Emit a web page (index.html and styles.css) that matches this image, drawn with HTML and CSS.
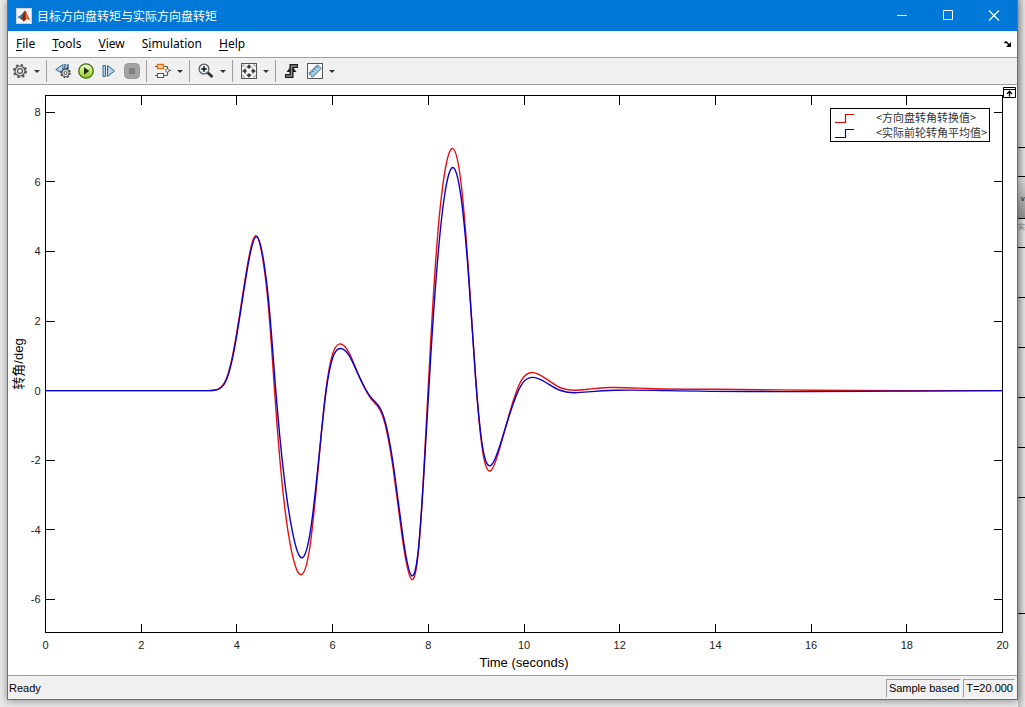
FILE: index.html
```html
<!DOCTYPE html>
<html lang="zh-CN">
<head>
    <meta charset="UTF-8">
    <meta name="viewport" content="width=device-width, initial-scale=1.0">
    <title>目标方向盘转矩与实际方向盘转矩</title>
    <link rel="stylesheet" href="styles.css">
</head>
<body>

    <main class="window">
        <header class="titlebar">
            <svg class="logo" width="16" height="16" viewBox="0 0 16 16">
                <rect x="0.5" y="0.5" width="15" height="15" fill="#f2f5f7" stroke="#c9d3da"/>
                <path d="M1.5 9 L5 7 L7 9 L4.5 11 Z" fill="#2d7fae"/>
                <path d="M5 7 C7 6 7.5 3.5 9 2.5 L7 9 Z" fill="#1d4a68"/>
                <path d="M9 2.5 C10.5 3 12 9 14.5 12.5 C12.5 11.5 11.5 10.5 10.5 11 C9.5 11.5 8.5 13.5 7.5 13.5 C7 12 6 11 4.5 11 C7 9.5 8 6 9 2.5 Z" fill="#c8401c"/>
                <path d="M9 2.5 C9.8 5 10 8 9.3 12 L7.5 13.5 C7 12 6 11 4.5 11 C7 9.5 8 6 9 2.5 Z" fill="#8c2313"/>
                <path d="M9.3 4 C10.5 6 11 8.5 12 10.3 L10 10.5 Z" fill="#f08a2c"/>
            </svg>
            <h1>目标方向盘转矩与实际方向盘转矩</h1>
            <button type="button" class="caption" aria-label="Minimize">
                <svg width="12" height="12" viewBox="0 0 12 12"><path d="M1 5.5 H11" stroke="#fff"/></svg>
            </button>
            <button type="button" class="caption" aria-label="Maximize">
                <svg width="12" height="12" viewBox="0 0 12 12"><path d="M1.5 0.5 H10.5 V9.5 H1.5 Z" stroke="#fff" fill="none"/></svg>
            </button>
            <button type="button" class="caption" aria-label="Close">
                <svg width="12" height="12" viewBox="0 0 12 12"><path d="M1 0.5 L11 10.5 M11 0.5 L1 10.5" stroke="#fff" stroke-width="1.2"/></svg>
            </button>
        </header>

        <nav class="menubar">
            <button type="button"><u>F</u>ile</button>
            <button type="button"><u>T</u>ools</button>
            <button type="button"><u>V</u>iew</button>
            <button type="button">S<u>i</u>mulation</button>
            <button type="button"><u>H</u>elp</button>
            <button type="button" class="dock" aria-label="Dock">
                <svg width="8" height="7" viewBox="0 0 8 7"><path d="M0.5 2 L2 0.8 L5.5 4.3" stroke="#000" stroke-width="1.5" fill="none"/><path d="M7 1 V6 H2 Z" fill="#000"/></svg>
            </button>
        </nav>

        <div class="toolbar">
            <button type="button" class="tool" aria-label="Configuration">
                <svg width="16" height="16" viewBox="0 0 16 16">
                    <circle cx="8" cy="8" r="6.2" fill="none" stroke="#555" stroke-width="1.8" stroke-dasharray="2.4 2.47"/>
                    <circle cx="8" cy="8" r="5" fill="#ddd" stroke="#555" stroke-width="1.2"/>
                    <circle cx="8" cy="8" r="2.4" fill="#f5f5f5" stroke="#555" stroke-width="1.2"/>
                </svg>
            </button>
            <button type="button" class="caret" aria-label="Configuration options"></button>
            <span class="sep"></span>
            <button type="button" class="tool" aria-label="Stepping options">
                <svg width="16" height="16" viewBox="0 0 16 16">
                    <path d="M8 1.5 V11 L0.8 6.5 Z" fill="#b9d3e8" stroke="#33658f"/>
                    <path d="M9.5 1.5 H11 V6 H9.5 Z M12.5 1.5 H13.5 V6 H12.5 Z" fill="#b9d3e8" stroke="#33658f" stroke-width="0.8"/>
                    <circle cx="10.5" cy="10" r="4.5" fill="none" stroke="#444" stroke-width="1.6" stroke-dasharray="1.8 1.73"/>
                    <circle cx="10.5" cy="10" r="3.7" fill="#eee" stroke="#444"/>
                    <circle cx="10.5" cy="10" r="1.5" fill="#fff" stroke="#444"/>
                </svg>
            </button>
            <button type="button" class="tool" aria-label="Run">
                <svg width="16" height="16" viewBox="0 0 16 16">
                    <defs>
                        <linearGradient id="run" x1="0" y1="0" x2="0" y2="1">
                            <stop offset="0" stop-color="#f4fbe2"/>
                            <stop offset="0.6" stop-color="#b9e45c"/>
                            <stop offset="1" stop-color="#7fc41c"/>
                        </linearGradient>
                    </defs>
                    <circle cx="8" cy="8" r="7.2" fill="url(#run)" stroke="#3f6b12" stroke-width="1.3"/>
                    <path d="M6 4.2 L11.3 8 L6 11.8 Z" fill="#1d2b10"/>
                </svg>
            </button>
            <button type="button" class="tool" aria-label="Step forward">
                <svg width="16" height="16" viewBox="0 0 16 16">
                    <path d="M2 2.5 H4.5 V13.5 H2 Z M6.5 2.5 L13.5 8 L6.5 13.5 Z" fill="#b5d3ec" stroke="#33658f"/>
                </svg>
            </button>
            <button type="button" class="tool" aria-label="Stop" disabled>
                <svg width="16" height="16" viewBox="0 0 16 16">
                    <rect x="0.5" y="0.5" width="15" height="15" rx="4" fill="#a3a3a3" stroke="#979797"/>
                    <rect x="5" y="5" width="6" height="6" fill="#808080"/>
                </svg>
            </button>
            <span class="sep"></span>
            <button type="button" class="tool" aria-label="Highlight block">
                <svg width="16" height="16" viewBox="0 0 16 16">
                    <path d="M0 3.5 H12.5 V6 M12.5 9 V12.5 H0 M14 7.5 H16" fill="none" stroke="#555"/>
                    <rect x="2.5" y="1.5" width="6" height="4" fill="#ffd9b0" stroke="#e0700f" stroke-width="1.4"/>
                    <rect x="2.5" y="10.5" width="6" height="4" fill="#fff" stroke="#555"/>
                    <circle cx="12.5" cy="7.5" r="1.7" fill="#fff" stroke="#555"/>
                </svg>
            </button>
            <button type="button" class="caret" aria-label="Highlight options"></button>
            <span class="sep"></span>
            <button type="button" class="tool" aria-label="Zoom">
                <svg width="16" height="16" viewBox="0 0 16 16">
                    <path d="M9.5 9.5 L14.5 14" stroke="#333" stroke-width="3"/>
                    <circle cx="6" cy="6" r="4.9" fill="#e3f0f7" stroke="#555" stroke-width="1.2"/>
                    <path d="M6 3.2 V8.8 M3.2 6 H8.8" stroke="#111" stroke-width="1.6"/>
                </svg>
            </button>
            <button type="button" class="caret" aria-label="Zoom options"></button>
            <span class="sep"></span>
            <button type="button" class="tool" aria-label="Scale axes">
                <svg width="16" height="16" viewBox="0 0 16 16">
                    <rect x="0.5" y="0.5" width="15" height="15" fill="#f6f6f6" stroke="#555"/>
                    <path d="M8 1.2 L11 4.6 H5 Z M8 14.8 L11 11.4 H5 Z M1.2 8 L4.6 5 V11 Z M14.8 8 L11.4 5 V11 Z" fill="#3c3c3c"/>
                    <path d="M8 4 V5.5 M8 10.5 V12 M4 8 H5.5 M10.5 8 H12" stroke="#3c3c3c" stroke-width="2"/>
                    <path d="M2 4 V2 H4 M12 2 H14 V4 M14 12 V14 H12 M4 14 H2 V12" fill="none" stroke="#999"/>
                </svg>
            </button>
            <button type="button" class="caret" aria-label="Scale options"></button>
            <span class="sep"></span>
            <button type="button" class="tool" aria-label="Triggers">
                <svg width="16" height="16" viewBox="0 0 16 16">
                    <path d="M1 13 H7.5 V3 H14" fill="none" stroke="#1c1c1c" stroke-width="4"/>
                    <path d="M7.5 2.5 L12.5 9 H2.5 Z" fill="#1c1c1c"/>
                    <path d="M2 13 H7.5 V3 H13" fill="none" stroke="#8c8c8c" stroke-width="1.4"/>
                </svg>
            </button>
            <button type="button" class="tool" aria-label="Measurements">
                <svg width="16" height="16" viewBox="0 0 16 16">
                    <rect x="0.5" y="0.5" width="15" height="15" fill="#fafafa" stroke="#555"/>
                    <path d="M10.5 1.8 L14.2 5.5 L5.5 14.2 L1.8 10.5 Z" fill="#a3cfe6" stroke="#3f7896"/>
                    <path d="M9 3.5 L10.5 5 M7 5.5 L8.5 7 M5 7.5 L6.5 9 M3.2 9.3 L4.5 10.6" stroke="#2a566e"/>
                </svg>
            </button>
            <button type="button" class="caret" aria-label="Measurement options"></button>
        </div>

        <section class="scope">
            <svg id="plot" class="plot" role="img" aria-label="转角/deg"></svg>
            <button type="button" class="expand" aria-label="Maximize axes">
                <svg width="13" height="11" viewBox="0 0 13 11"><path d="M0.5 0.5 H12.5 V10.5 H0.5 Z M0.5 2.5 H12.5" fill="#fff" stroke="#000"/><path d="M6.5 9.5 V5 M4 7 L6.5 4.3 L9 7" fill="none" stroke="#000" stroke-width="1.3"/></svg>
            </button>
            <ul class="legend">
                <li>
                    <svg width="19" height="10" viewBox="0 0 19 10"><path d="M0 9.5 H10.5 V1.5 H19" fill="none" stroke="#e00000" stroke-width="1.2"/></svg>
                    <span>&lt;方向盘转角转换值&gt;</span>
                </li>
                <li>
                    <svg width="19" height="10" viewBox="0 0 19 10"><path d="M0 9.5 H10.5 V1.5 H19" fill="none" stroke="#0000d0" stroke-width="1.2"/></svg>
                    <span>&lt;实际前轮转角平均值&gt;</span>
                </li>
            </ul>
        </section>

        <footer class="statusbar">
            <span class="ready">Ready</span>
            <span class="panel">Sample based</span>
            <span class="panel">T=20.000</span>
        </footer>
    </main>

    <!-- edge of the window behind -->
    <aside class="behind">
        <div class="first"></div>
        <div class="head"></div>
        <div class="tab">v</div>
        <div class="label">实</div>
        <div class="row"></div>
        <div class="row"></div>
        <div class="row"></div>
        <div class="row"></div>
        <div class="row"></div>
        <div class="tall"></div>
        <div class="last"></div>
    </aside>

    <script src="scope.js"></script>
</body>
</html>
```

FILE: styles.css
```css
* {
    box-sizing: border-box;
}

body {
    margin: 0;
    padding-left: 7px;
    height: 100vh;
    display: flex;
    overflow: hidden;
    background-color: #e9e9e9;
    font-family: "Liberation Sans", Arial, sans-serif;
    color: #000;
}

button {
    margin: 0;
    padding: 0;
    border: none;
    background: none;
    font: inherit;
    color: inherit;
}

svg {
    display: block;
    flex-shrink: 0;
}

.window {
    flex: 1;
    min-width: 0;
    margin-bottom: 7px;
    display: flex;
    flex-direction: column;
    position: relative;
    border: 1px solid #2b80b8;
    border-top-color: #0078d7;
    background-color: #fff;
    box-shadow: 0 1px 8px rgba(0, 0, 0, 0.4);
}

/* title bar */
.titlebar {
    height: 30px;
    display: flex;
    align-items: center;
    padding-left: 8px;
    background-color: #0078d7;
    color: #fff;
}

.titlebar h1 {
    flex: 1;
    margin: 0 0 0 5px;
    font: 12px/16px "Noto Sans CJK SC", sans-serif;
}

.caption {
    width: 46px;
    height: 30px;
    display: flex;
    justify-content: center;
    align-items: center;
}

/* menu */
.menubar {
    height: 26px;
    display: flex;
    align-items: center;
    gap: 17px;
    padding: 0 5px 0 8px;
    font: 12px/18px "Noto Sans", sans-serif;
}

.menubar u {
    text-underline-offset: 2px;
}

.dock {
    margin-left: auto;
}

/* toolbar */
.toolbar {
    height: 28px;
    display: flex;
    align-items: center;
    border-top: 1px solid #a0a0a0;
    border-bottom: 1px solid #a0a0a0;
    background-color: #f0f0f0;
}

.tool {
    width: 23px;
    height: 24px;
    display: flex;
    justify-content: center;
    align-items: center;
}

.caret {
    width: 12px;
    height: 24px;
    display: flex;
    justify-content: center;
    align-items: center;
}

.caret::before {
    content: "";
    border: 3px solid transparent;
    border-top-color: #333;
    border-bottom: none;
}

.sep {
    width: 1px;
    height: 22px;
    margin: 0 4px 0 3px;
    background-color: #a0a0a0;
}

/* plot */
.scope {
    flex: 1;
    min-height: 0;
    position: relative;
}

.plot {
    width: 100%;
    height: 100%;
    position: absolute;
}

.plot text {
    font-size: 11px;
    fill: #222;
}

.plot .title {
    font-family: "Liberation Sans", "Noto Sans CJK SC", sans-serif;
    font-size: 13px;
    fill: #000;
}

.plot .axis {
    fill: none;
    stroke: #000;
    shape-rendering: crispEdges;
}

.plot .line {
    fill: none;
    stroke-width: 1.4;
}

.plot .target {
    stroke: #e60f0f;
}

.plot .actual {
    stroke: #0a00cc;
}

.expand {
    position: absolute;
    top: 2px;
    right: 1px;
}

.legend {
    position: absolute;
    top: 23px;
    right: 27px;
    width: 160px;
    margin: 0;
    padding: 1px 4px;
    border: 1px solid #000;
    background-color: #fff;
    list-style: none;
    font: 11px/15px "Noto Sans CJK SC", sans-serif;
    color: #333;
}

.legend li {
    display: flex;
    align-items: center;
    gap: 22px;
    white-space: nowrap;
}

/* status bar */
.statusbar {
    height: 24px;
    display: flex;
    align-items: center;
    gap: 2px;
    padding: 2px 2px 1px 1px;
    border-top: 1px solid #a0a0a0;
    background-color: #f0f0f0;
    font-size: 11px;
}

.ready {
    flex: 1;
}

.panel {
    height: 19px;
    padding: 0 1px 0 2px;
    border: 1px solid #fff;
    border-top-color: #a0a0a0;
    border-left-color: #a0a0a0;
    line-height: 17px;
}

/* window behind */
.behind {
    width: 7px;
    overflow: hidden;
    background: linear-gradient(to right, #bcbcbc, #e4e4e4);
    font: 7px/14px "Noto Sans CJK SC", sans-serif;
}

.behind div {
    height: 50px;
    border-top: 1px solid #000;
}

.behind .first {
    height: 147px;
    border-top: none;
}

.behind .head {
    height: 29px;
}

.behind .tab {
    height: 42px;
    padding: 14px 0 0 3px;
    background: linear-gradient(#d8d8d8, #8f8f8f);
}

.behind .label {
    height: 29px;
    color: #777;
}

.behind .tall {
    height: 116px;
}

.behind .last {
    height: 94px;
}
```

FILE: scope.js
```js
var target = [
    [3.4, 0], [3.53, 0.01], [3.66, 0.09], [3.79, 0.38], [3.93, 1.15], [4.07, 2.3],
    [4.22, 3.6], [4.4, 4.45], [4.55, 3.7], [4.66, 2.4], [4.8, -0.25], [4.97, -3],
    [5.15, -4.66], [5.36, -5.28], [5.54, -4.35], [5.71, -2.05], [5.86, 0], [6, 1.05],
    [6.17, 1.34], [6.35, 1.07], [6.52, 0.52], [6.69, 0.02], [6.83, -0.28], [7, -0.58],
    [7.13, -1.16], [7.27, -2.28], [7.45, -4.16], [7.65, -5.42], [7.8, -4.52],
    [7.92, -1.95], [8.05, 1.4], [8.18, 4.2], [8.34, 6.24], [8.52, 6.95], [8.69, 5.9],
    [8.85, 3.23], [8.99, 0.33], [9.13, -1.68], [9.29, -2.31], [9.5, -1.62], [9.72, -0.54],
    [9.93, 0.26], [10.16, 0.52], [10.45, 0.35], [10.75, 0.09], [11.03, 0.01],
    [11.4, 0.05], [11.8, 0.09], [12.6, 0.06], [14, 0.04], [16, 0.01], [20, 0]
];

var actual = [
    [3.4, 0], [3.53, 0.01], [3.67, 0.09], [3.8, 0.38], [3.94, 1.15], [4.08, 2.3],
    [4.23, 3.59], [4.41, 4.42], [4.56, 3.72], [4.67, 2.47], [4.81, 0.05], [4.98, -2.4],
    [5.16, -4.05], [5.37, -4.8], [5.54, -4], [5.71, -1.97], [5.86, -0.05], [6, 0.94],
    [6.17, 1.21], [6.35, 1], [6.52, 0.51], [6.69, 0.04], [6.83, -0.24], [7, -0.52],
    [7.14, -1.12], [7.28, -2.24], [7.46, -4.1], [7.66, -5.32], [7.8, -4.46],
    [7.92, -2.1], [8.05, 0.95], [8.19, 3.68], [8.35, 5.7], [8.53, 6.4], [8.69, 5.5],
    [8.85, 3.13], [8.99, 0.35], [9.13, -1.58], [9.29, -2.16], [9.5, -1.56],
    [9.72, -0.6], [9.93, 0.13], [10.16, 0.38], [10.45, 0.24], [10.75, 0.01],
    [11.03, -0.06], [11.4, -0.03], [11.9, 0.01], [13, 0], [20, 0]
];

var svg = document.getElementById("plot");
var yMin = -6.95;
var yMax = 8.48;

function add(name, attrs, text) {
    var el = document.createElementNS("http://www.w3.org/2000/svg", name);
    for (var key in attrs) {
        el.setAttribute(key, attrs[key]);
    }
    if (text !== undefined) {
        el.textContent = text;
    }
    svg.appendChild(el);
}

// Cubic spline through the points, level at both ends
function curve(points) {
    var n = points.length;
    var slopes = [0];
    var c = [0];
    var i, p, q, h;
    for (i = 1; i < n - 1; i++) {
        var a = 1 / (points[i][0] - points[i - 1][0]);
        var b = 1 / (points[i + 1][0] - points[i][0]);
        var r = 3 * (a * a * (points[i][1] - points[i - 1][1]) + b * b * (points[i + 1][1] - points[i][1]));
        var m = 2 * (a + b) - a * c[i - 1];
        c[i] = b / m;
        slopes[i] = (r - a * slopes[i - 1]) / m;
    }
    slopes[n - 1] = 0;
    for (i = n - 2; i > 0; i--) {
        slopes[i] -= c[i] * slopes[i + 1];
    }

    var d = "L" + points[0].join(" ");
    for (i = 1; i < n; i++) {
        p = points[i - 1];
        q = points[i];
        h = (q[0] - p[0]) / 3;
        d += "C" + [p[0] + h, p[1] + slopes[i - 1] * h, q[0] - h, q[1] - slopes[i] * h, q[0], q[1]].join(" ");
    }
    return d;
}

function draw() {
    var left = 37.5;
    var top = 10.5;
    var right = svg.clientWidth - 14.5;
    var bottom = svg.clientHeight - 42.5;

    function x(t) {
        return left + t / 20 * (right - left);
    }
    function y(v) {
        return bottom - (v - yMin) / (yMax - yMin) * (bottom - top);
    }
    function scaled(points) {
        return points.map(function (p) {
            return [x(p[0]), y(p[1])];
        });
    }

    svg.innerHTML = "";

    // Frame and ticks
    var d = "M" + left + " " + top + "H" + right + "V" + bottom + "H" + left + "Z";
    for (var t = 0; t <= 20; t += 2) {
        if (t > 0 && t < 20) {
            d += "M" + x(t) + " " + top + "v9M" + x(t) + " " + bottom + "v-9";
        }
        add("text", { x: x(t), y: bottom + 16, "text-anchor": "middle" }, t);
    }
    for (var v = -6; v <= 8; v += 2) {
        d += "M" + left + " " + y(v) + "h9M" + right + " " + y(v) + "h-9";
        add("text", { x: left - 5, y: y(v) + 4, "text-anchor": "end" }, v);
    }
    add("path", { "class": "axis", d: d });

    // Both signals stay at zero until the first point
    var start = "M" + x(0) + " " + y(0);
    add("path", { "class": "line target", d: start + curve(scaled(target)) });
    add("path", { "class": "line actual", d: start + curve(scaled(actual)) });

    var midY = (top + bottom) / 2;
    add("text", { "class": "title", x: (left + right) / 2, y: bottom + 34, "text-anchor": "middle" }, "Time (seconds)");
    add("text", { "class": "title", transform: "translate(15 " + midY + ") rotate(-90)", "text-anchor": "middle" }, "转角/deg");
}

draw();
window.addEventListener("resize", draw);
```
